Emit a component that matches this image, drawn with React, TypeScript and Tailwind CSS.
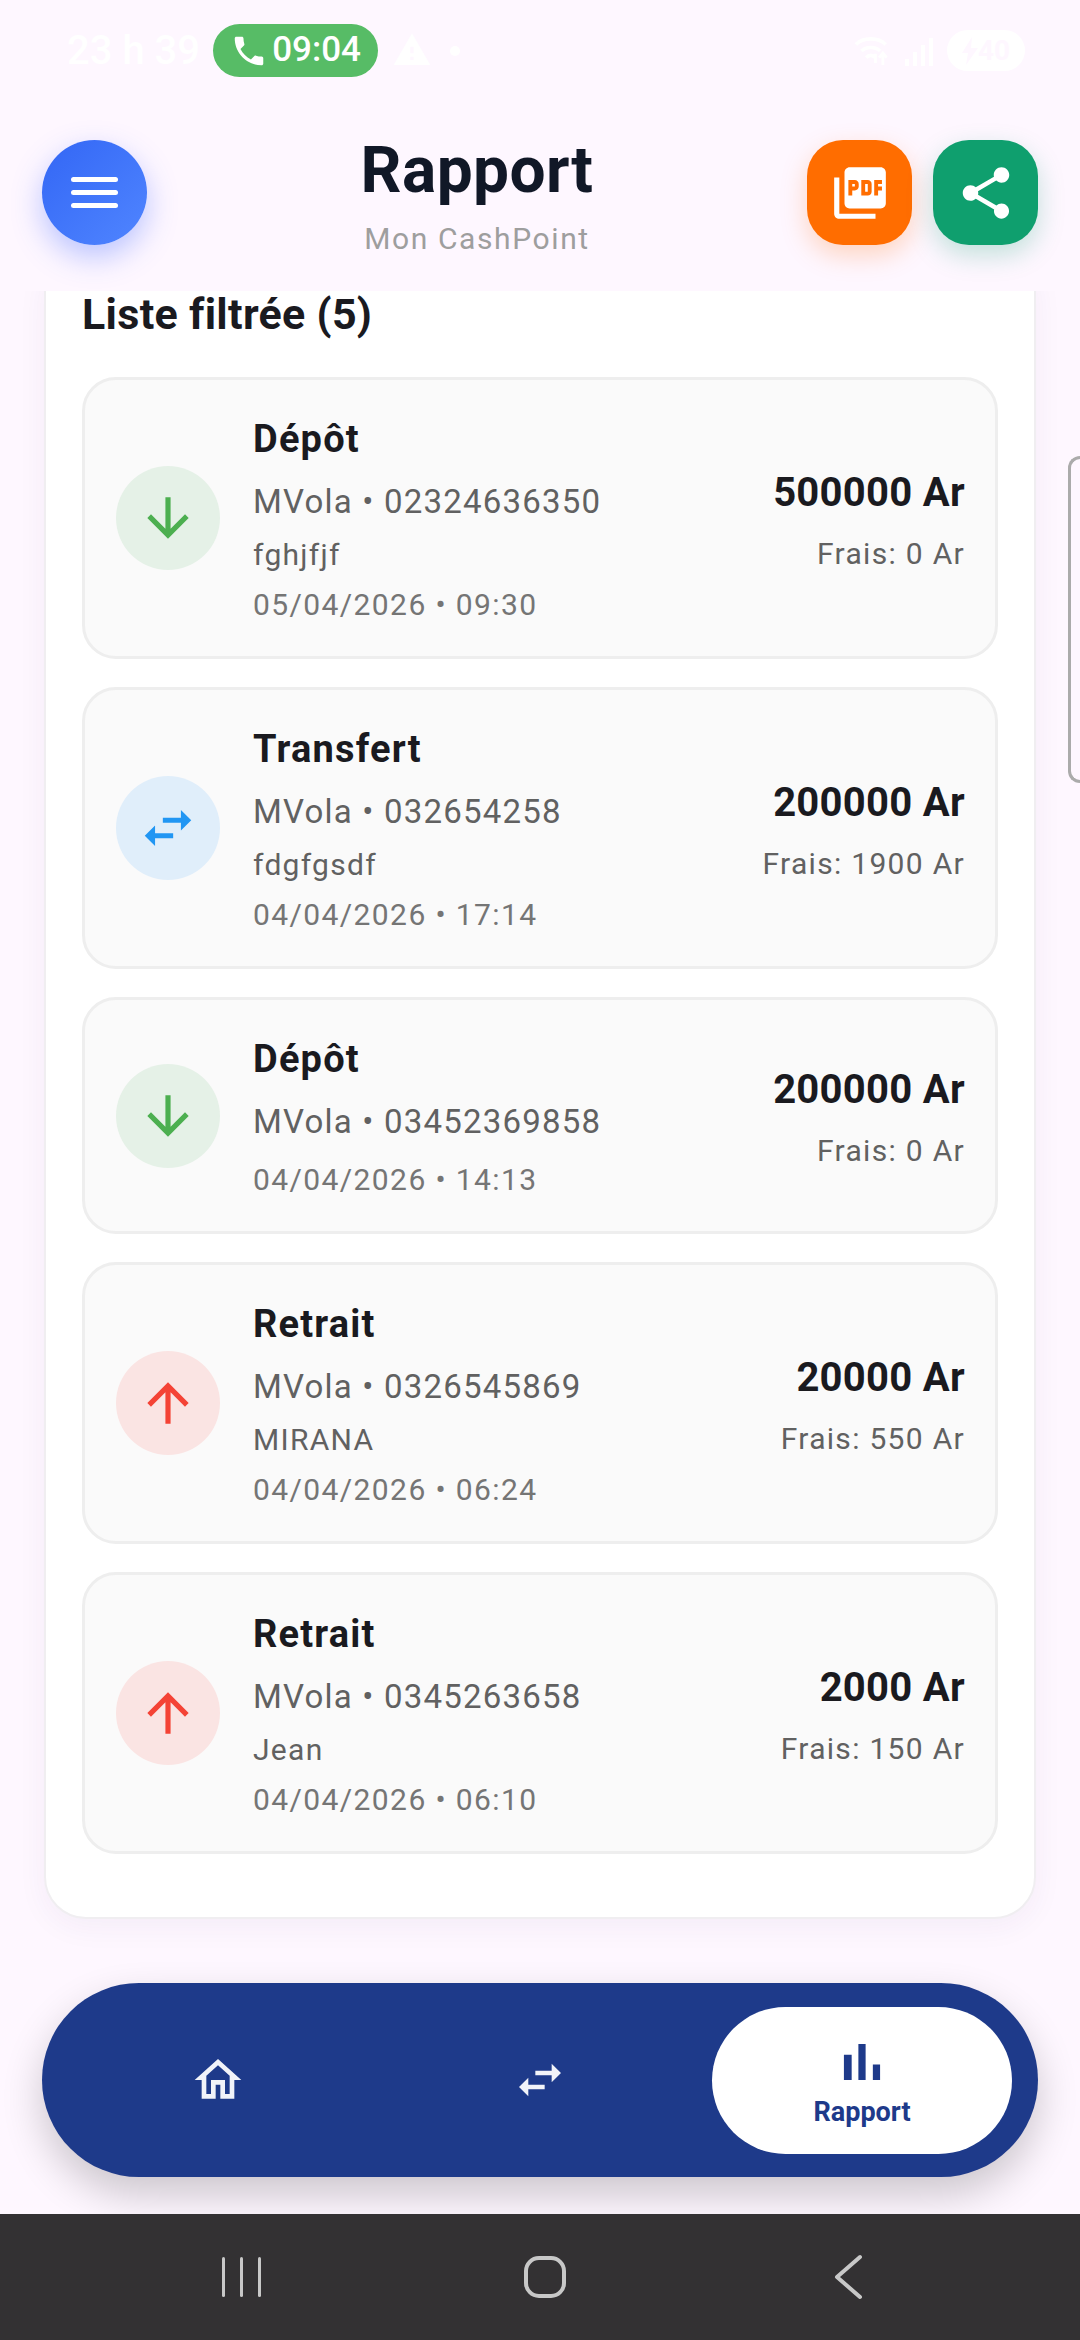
import React from "react";

type Kind = "in" | "swap" | "out";
type Tx = { title: string; kind: Kind; phone: string; note?: string; date: string; amount: string; fee: string };

const rows: Tx[] = [
  { title: "Dépôt", kind: "in", phone: "MVola • 02324636350", note: "fghjfjf", date: "05/04/2026 • 09:30", amount: "500000 Ar", fee: "Frais: 0 Ar" },
  { title: "Transfert", kind: "swap", phone: "MVola • 032654258", note: "fdgfgsdf", date: "04/04/2026 • 17:14", amount: "200000 Ar", fee: "Frais: 1900 Ar" },
  { title: "Dépôt", kind: "in", phone: "MVola • 03452369858", date: "04/04/2026 • 14:13", amount: "200000 Ar", fee: "Frais: 0 Ar" },
  { title: "Retrait", kind: "out", phone: "MVola • 0326545869", note: "MIRANA", date: "04/04/2026 • 06:24", amount: "20000 Ar", fee: "Frais: 550 Ar" },
  { title: "Retrait", kind: "out", phone: "MVola • 0345263658", note: "Jean", date: "04/04/2026 • 06:10", amount: "2000 Ar", fee: "Frais: 150 Ar" },
];

const Mi = ({ d, size, fill }: { d: string; size: number; fill: string }) => (
  <svg width={size} height={size} viewBox="0 0 24 24" fill={fill}>
    <path d={d} />
  </svg>
);

const P = {
  down: "M20 12l-1.41-1.41L13 16.17V4h-2v12.17l-5.58-5.59L4 12l8 8 8-8z",
  up: "M4 12l1.41 1.41L11 7.83V20h2V7.83l5.58 5.59L20 12l-8-8-8 8z",
  swap: "M6.99 11L3 15l3.99 4v-3H14v-2H6.99v-3zM21 9l-4-4v3h-7v2h7v3l4-4z",
  home: "M12 5.69l5 4.5V18h-2v-6H9v6H7v-7.81l5-4.5zM12 3L2 12h3v8h6v-6h2v6h6v-8h3L12 3z",
  bars: "M5 9.2h3V19H5zM10.6 5h2.8v14h-2.8zm5.6 8H19v6h-2.8z",
  pdf: "M20 2H8c-1.1 0-2 .9-2 2v12c0 1.1.9 2 2 2h12c1.1 0 2-.9 2-2V4c0-1.1-.9-2-2-2zm-8.5 7.5c0 .83-.67 1.5-1.5 1.5H9v2H7.5V7H10c.83 0 1.5.67 1.5 1.5v1zm5 2c0 .83-.67 1.5-1.5 1.5h-2.5V7H15c.83 0 1.5.67 1.5 1.5v3zm4-3H19v1h1.5V11H19v2h-1.5V7h3v1.5zM9 9.5h1v-1H9v1zM4 6H2v14c0 1.1.9 2 2 2h14v-2H4V6zm10 5.5h1v-3h-1v3z",
  share: "M18 16.08c-.76 0-1.44.3-1.96.77L8.91 12.7c.05-.23.09-.46.09-.7s-.04-.47-.09-.7l7.05-4.11c.54.5 1.25.81 2.04.81 1.66 0 3-1.34 3-3s-1.34-3-3-3-3 1.34-3 3c0 .24.04.47.09.7L8.04 9.81C7.5 9.31 6.79 9 6 9c-1.66 0-3 1.34-3 3s1.34 3 3 3c.79 0 1.5-.31 2.04-.81l7.12 4.16c-.05.21-.08.43-.08.65 0 1.61 1.31 2.92 2.92 2.92 1.61 0 2.92-1.31 2.92-2.92s-1.31-2.92-2.92-2.92z",
  call: "M6.62 10.79c1.44 2.83 3.76 5.14 6.59 6.59l2.2-2.2c.27-.27.67-.36 1.02-.24 1.12.37 2.33.57 3.57.57.55 0 1 .45 1 1V20c0 .55-.45 1-1 1-9.39 0-17-7.61-17-17 0-.55.45-1 1-1h3.5c.55 0 1 .45 1 1 0 1.25.2 2.45.57 3.57.11.35.03.74-.25 1.02l-2.2 2.2z",
  warn: "M1 21h22L12 2 1 21zm12-3h-2v-2h2v2zm0-4h-2v-4h2v4z",
};

const kinds = {
  in: { bg: "bg-[#E5F1E7]", d: P.down, c: "#4CAF50" },
  swap: { bg: "bg-[#E0EEFA]", d: P.swap, c: "#2196F3" },
  out: { bg: "bg-[#FAE4E3]", d: P.up, c: "#F44336" },
};

function Row({ t }: { t: Tx }) {
  const k = kinds[t.kind];
  return (
    <div className="flex items-center rounded-[34px] border-[3px] border-[#EEEEEE] bg-[#FAFAFA] pl-[31px] pr-[30px]">
      <div className={`w-[104px] h-[104px] rounded-full flex items-center justify-center shrink-0 ${k.bg}`}>
        <Mi d={k.d} size={62} fill={k.c} />
      </div>
      <div className="ml-[33px] flex-1 min-w-0 pt-[37px] pb-[33px]">
        <div className="text-[38px] leading-[44px] font-bold tracking-[1.2px] text-[#1A1A1F]">{t.title}</div>
        <div className="mt-[18px] text-[33px] leading-[46px] tracking-[1.2px] text-[#616161]">{t.phone}</div>
        {t.note && <div className="mt-[12px] text-[30px] leading-[36px] tracking-[1.3px] text-[#616161]">{t.note}</div>}
        <div className={`${t.note ? "mt-[14px]" : "mt-[17px]"} text-[30px] leading-[36px] tracking-[1.4px] text-[#757575]`}>{t.date}</div>
      </div>
      <div className="text-right shrink-0 pt-[10px]">
        <div className="text-[40px] leading-[44px] font-bold tracking-[0.3px] text-[#1A1A1F]">{t.amount}</div>
        <div className="mt-[17px] text-[30px] leading-[44px] tracking-[1.3px] text-[#616161]">{t.fee}</div>
      </div>
    </div>
  );
}

export default function App() {
  return (
    <div className="w-[1080px] h-[2340px] flex flex-col overflow-hidden bg-[#FEF7FF] font-[Roboto,sans-serif] relative">
      {/* status bar */}
      <div className="h-[84px] shrink-0 flex items-start pt-[24px] pl-[67px] pr-[55px] text-white">
        <span className="text-[40px] leading-[53px] font-medium mr-[13px]">23 h 39</span>
        <span className="h-[53px] w-[165px] rounded-full bg-[#57BC66] flex items-center justify-center gap-[4px] text-[35px] font-medium">
          <Mi d={P.call} size={38} fill="#fff" />
          09:04
        </span>
        <span className="ml-[14px] mt-[6px]"><Mi d={P.warn} size={40} fill="#fff" /></span>
        <span className="ml-[18px] mt-[22px] w-[10px] h-[10px] rounded-full bg-white" />
        <span className="ml-auto flex items-center h-[53px]">
          <svg width="41" height="32" viewBox="0 0 44 34" fill="none" stroke="#fff" strokeWidth="4">
            <path d="M2 10C10 2 26 2 34 10M8 17c5-5 15-5 20 0M13 24c3-3 7-3 10 0" />
            <path d="M31 32V20M27 24l4-5 4 5M23 20v10" strokeWidth="3" />
          </svg>
          <svg className="ml-[10px]" width="28" height="30" viewBox="0 0 28 30" fill="#fff">
            <rect x="0" y="23" width="4" height="7" /><rect x="8" y="16" width="4" height="14" /><rect x="16" y="9" width="4" height="21" /><rect x="24" y="2" width="4" height="28" />
          </svg>
          <span className="ml-[14px] w-[78px] h-[41px] rounded-full bg-white text-[#FEF7FF] text-[28px] leading-[41px] font-bold flex items-center justify-center">
            <svg width="16" height="28" viewBox="0 0 16 28" fill="#FEF7FF"><path d="M10 0L0 16h6l-2 12 12-17H9z" /></svg>
            40
          </span>
        </span>
      </div>

      {/* header */}
      <div className="h-[207px] shrink-0 overflow-hidden px-[42px] pt-[56px] flex items-start">
        <button className="w-[105px] h-[105px] rounded-full bg-gradient-to-br from-[#3366F5] to-[#5085FF] flex items-center justify-center shadow-[0_12px_30px_rgba(60,100,255,0.35)]">
          <span className="flex flex-col gap-[8px]">
            <span className="block w-[47px] h-[5px] rounded-full bg-white" />
            <span className="block w-[47px] h-[5px] rounded-full bg-white" />
            <span className="block w-[47px] h-[5px] rounded-full bg-white" />
          </span>
        </button>
        <div className="flex-1 text-center">
          <div className="text-[64px] leading-[70px] font-bold tracking-[0.4px] text-[#111827] -mt-[4px]">Rapport</div>
          <div className="text-[30px] leading-[40px] tracking-[1.6px] text-[#9E9E9E] mt-[13px]">Mon CashPoint</div>
        </div>
        <div className="flex gap-[21px]">
          <button className="w-[105px] h-[105px] rounded-[36px] bg-[#FF6D00] flex items-center justify-center shadow-[0_10px_26px_rgba(255,109,0,0.25)]">
            <Mi d={P.pdf} size={62} fill="#fff" />
          </button>
          <button className="w-[105px] h-[105px] rounded-[36px] bg-[#0F9F6E] flex items-center justify-center shadow-[0_10px_26px_rgba(15,159,110,0.25)]">
            <Mi d={P.share} size={62} fill="#fff" />
          </button>
        </div>
      </div>

      {/* list */}
      <div className="flex-1 min-h-0 px-[44px] relative overflow-hidden">
        <div className="-mt-[40px] bg-white rounded-[42px] border-[2px] border-[#F0EEF1] px-[36px] pt-[38px] pb-[63px] shadow-[0_8px_30px_rgba(60,30,90,0.05)]">
          <div className="text-[43px] leading-[46px] font-bold tracking-[0.3px] text-[#1A1A1F]">Liste filtrée (5)</div>
          <div className="mt-[40px] flex flex-col gap-[28px]">
            {rows.map((t, i) => (
              <Row key={i} t={t} />
            ))}
          </div>
        </div>
        <div className="absolute right-0 top-[165px] w-[12px] h-[327px] rounded-l-[12px] border-[3px] border-r-0 border-[#ABABAB]" />
      </div>

      {/* nav */}
      <div className="shrink-0 px-[42px] pb-[37px]">
        <div className="h-[194px] rounded-full bg-[#1E3A8A] px-[26px] grid grid-cols-3 gap-[22px] items-center shadow-[0_18px_40px_rgba(0,0,0,0.2)]">
          <div className="flex justify-center"><Mi d={P.home} size={56} fill="#F1F3F9" /></div>
          <div className="flex justify-center"><Mi d={P.swap} size={56} fill="#F1F3F9" /></div>
          <div className="h-[147px] rounded-full bg-white flex flex-col items-center justify-center text-[#1E3A8A]">
            <Mi d={P.bars} size={62} fill="#1E3A8A" />
            <span className="text-[27px] leading-[34px] font-bold mt-[2px]">Rapport</span>
          </div>
        </div>
      </div>

      {/* system nav */}
      <div className="h-[126px] shrink-0 bg-[#333133] grid grid-cols-3 pl-[90px] pr-[81px] relative z-10">
        <div className="flex items-center justify-center gap-[15px]">
          <span className="w-[3px] h-[40px] rounded bg-[#C8C8C8]" />
          <span className="w-[3px] h-[40px] rounded bg-[#C8C8C8]" />
          <span className="w-[3px] h-[40px] rounded bg-[#C8C8C8]" />
        </div>
        <div className="flex items-center justify-center">
          <span className="w-[42px] h-[42px] rounded-[15px] border-[4px] border-[#C8C8C8]" />
        </div>
        <div className="flex items-center justify-center">
          <svg width="30" height="46" viewBox="0 0 30 46" fill="none" stroke="#C8C8C8" strokeWidth="4" strokeLinecap="round" strokeLinejoin="round">
            <path d="M27 3 L4 23 L27 43" />
          </svg>
        </div>
      </div>
    </div>
  );
}
